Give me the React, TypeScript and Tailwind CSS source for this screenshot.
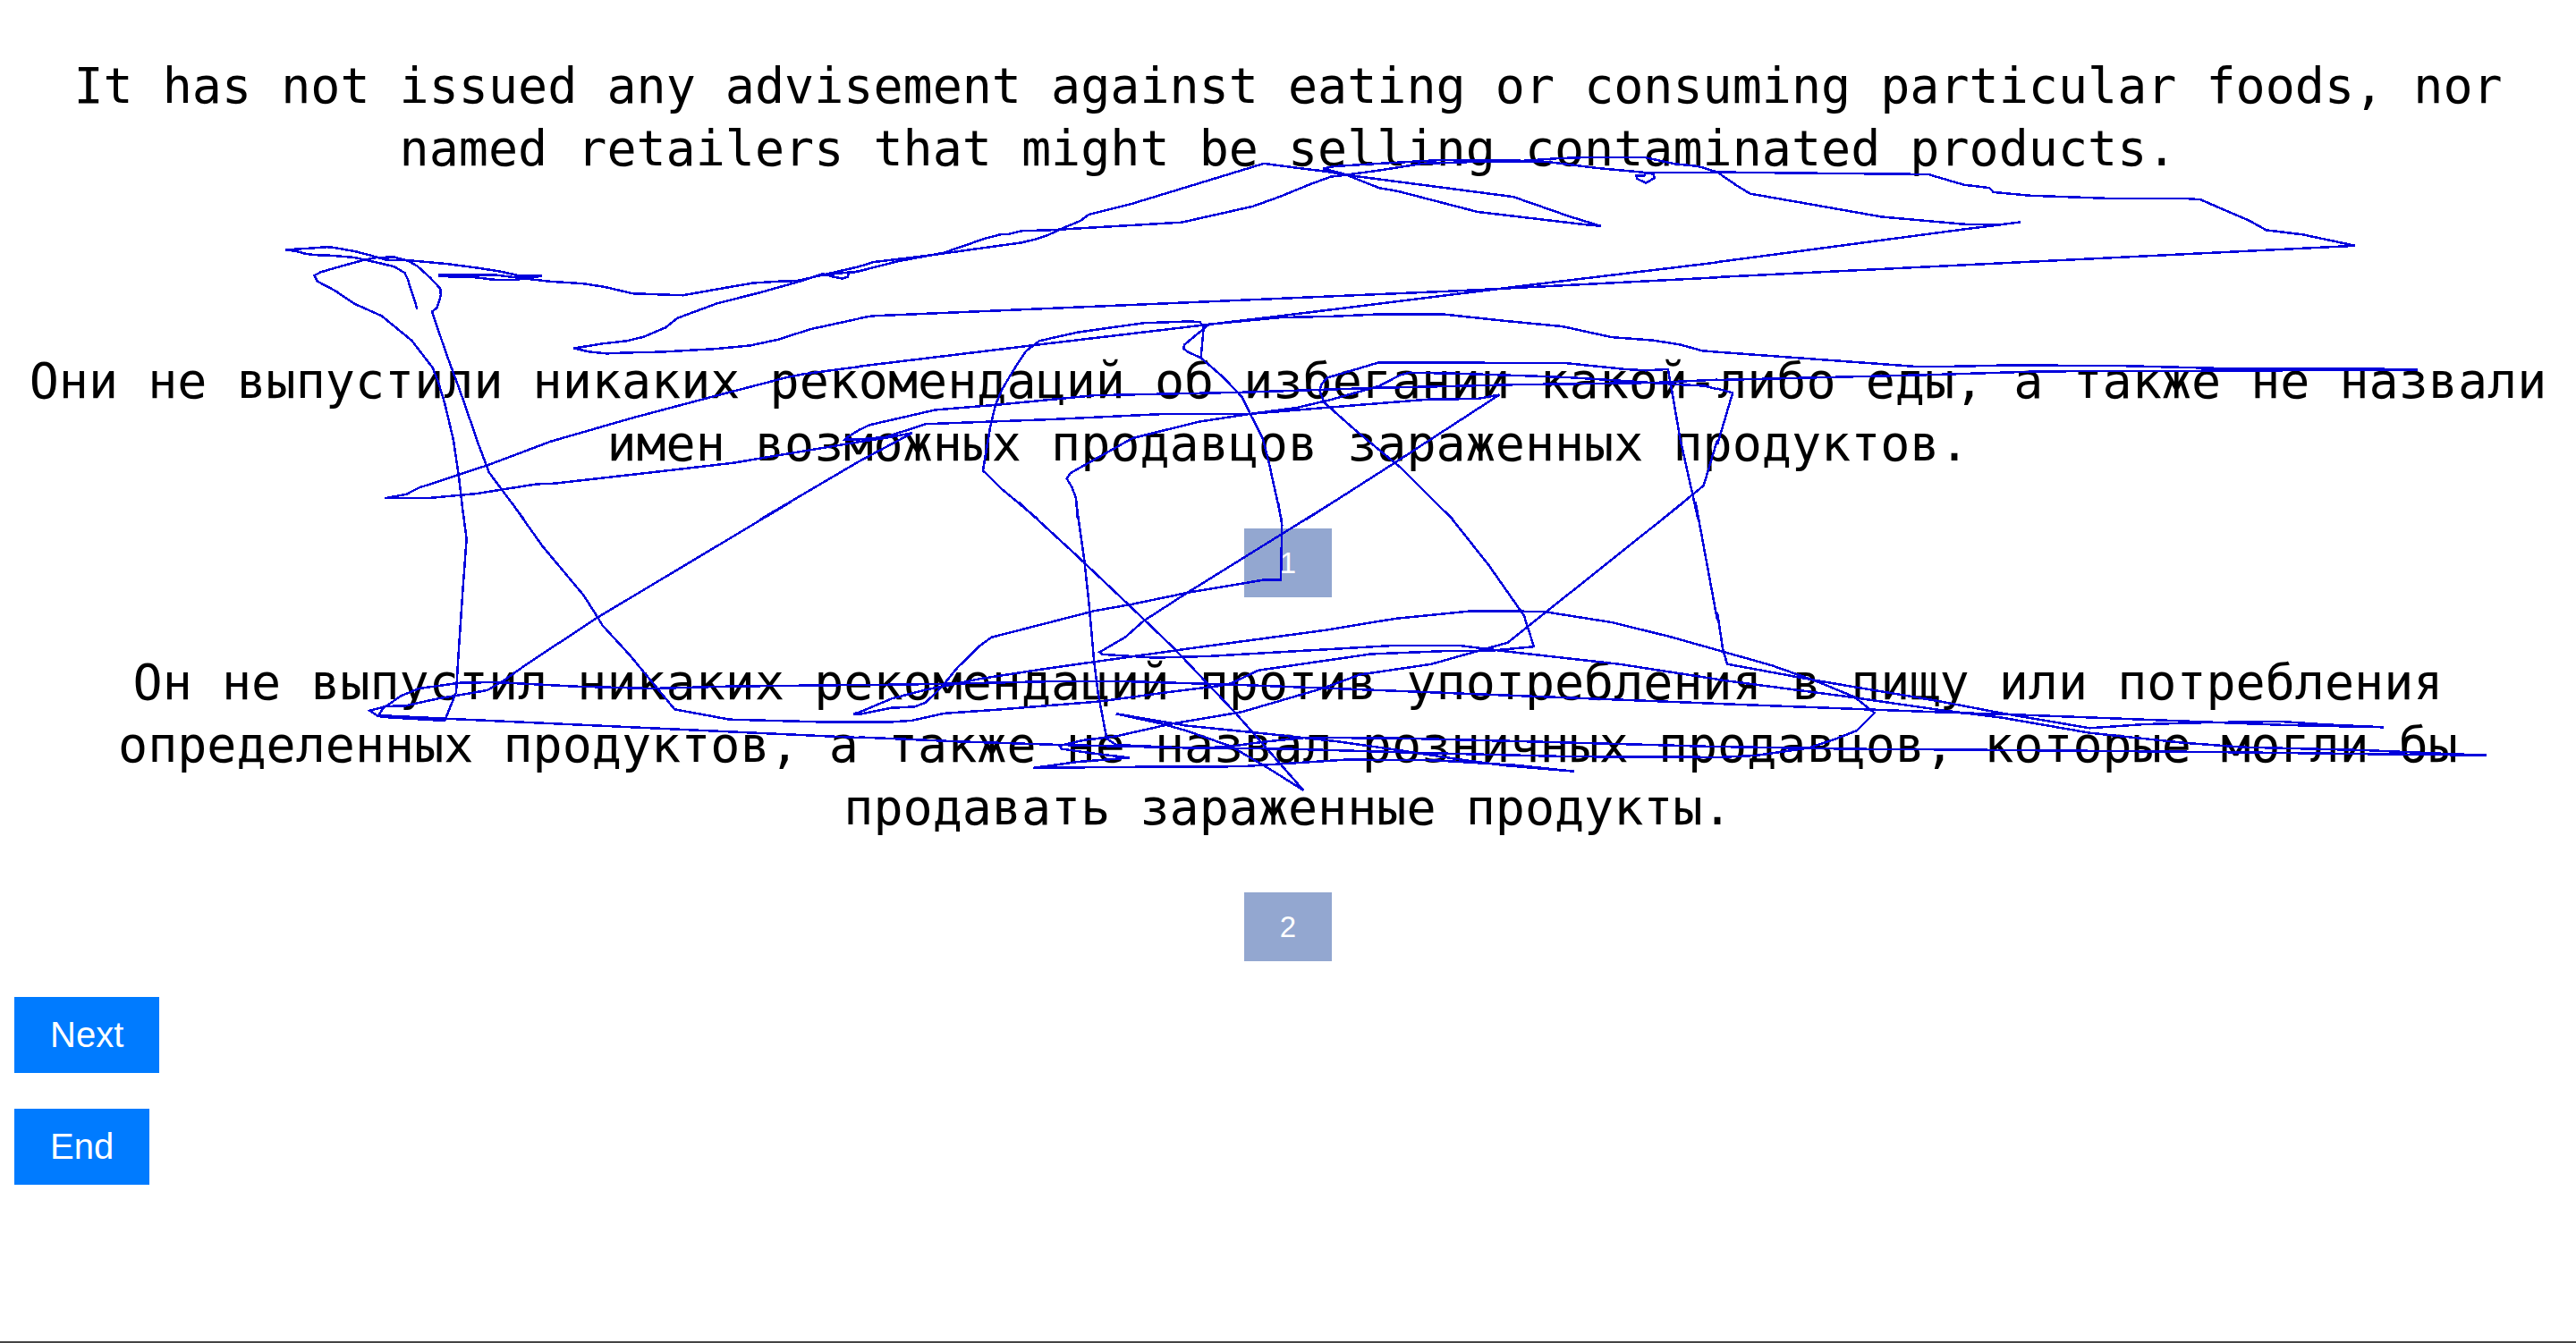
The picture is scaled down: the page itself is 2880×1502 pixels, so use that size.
type Tile = { transform: string; strokes: string[] };

// The scribble is stored as six drawing tiles, each in its own units.
const tiles: Tile[] = [
  {
    transform: "translate(0 41) scale(.612245 .344388)",
    strokes: [
      "762,885 744,785 739,767 720,747 690,734 647,717 607,711 575,709 555,704 542,697 521,692 560,688 597,683 610,685 650,698 680,712 705,725 750,727 817,738 868,750 912,762 950,777 990,777 940,790 900,789 870,782 803,778 803,774 905,774 960,786 1005,795 1065,802 1105,813 1155,834 1247,840 1310,820 1375,800 1420,795 1455,793 1500,775 1568,747",
      "688,717 720,716 745,728 762,745 785,782 804,818 805,840 798,880 789,893 815,1030 840,1150 875,1330 890,1400 893,1415 920,1480 957,1568",
      "688,717 665,725 630,742 585,765 574,776 580,795 612,825 648,868 697,907 752,987 790,1075 800,1120 812,1190 828,1310 838,1430 847,1568",
      "1568,762 1550,768 1548,780 1538,786 1520,779 1503,770 1460,795 1390,830 1310,866 1237,914 1215,945 1175,975 1145,988 1100,997 1048,1012 1075,1023 1107,1029 1150,1026 1205,1024 1305,1014 1370,1003 1420,984 1480,950 1568,916",
      "1500,775 1535,768 1568,762",
      "1568,1072 1470,1095 1440,1105 1310,1165 1155,1238 1005,1315 890,1392 765,1465 742,1486 703,1499 785,1498 870,1484 980,1453 1012,1451 1200,1413 1340,1384 1430,1357 1568,1316",
      "1568,1278 1548,1300 1543,1308 1568,1308",
      "1568,1380 1388,1568",
    ],
  },
  {
    transform: "translate(960 41) scale(.612245 .344388)",
    strokes: [
      "0,747 27,732 130,710 297,669 325,657 345,645 370,624 405,598 420,578 500,542 740,412 800,426 850,437 890,449 1195,520 1300,585 1355,615 1330,611 1230,590 1130,569 985,502 950,491 885,445 848,428 870,421 960,411 1060,401 1215,403 1280,395 1330,392 1435,392 1490,413 1533,421 1568,440",
      "0,762 70,730 155,702 230,656 260,642 275,641 297,631 350,628 590,603 720,551 770,519 825,479 862,455 890,449 955,433 1030,412 1150,405 1260,407 1350,427 1435,441 1568,441",
      "1437,441 1452,447 1453,459 1438,475 1422,462 1420,452 1435,451 1437,441",
      "0,915 25,907 500,871 1100,825 1568,782",
      "0,1071 320,1002 770,907 1200,812 1568,733",
      "1568,1024 1540,1020 1500,1000 1450,986 1375,976 1285,941 1180,923 1065,901 955,901 870,908 770,912 640,934 595,1000 593,1012 600,1023 625,1043 665,1105 700,1170 715,1225 738,1305 750,1390 772,1568",
      "625,1043 630,945 623,926 598,925 520,930 400,960 330,988 305,1022 282,1085 262,1145 250,1195 240,1270 227,1409 262,1470 328,1568",
      "0,1278 20,1261 140,1212 250,1196 430,1165 700,1155 940,1141 1200,1130 1450,1124 1568,1114",
      "0,1308 50,1300 122,1258 350,1243 550,1226 715,1225 800,1205 860,1180 950,1135 990,1098 1007,1091 1090,1094 1230,1102 1300,1107 1390,1117 1500,1130 1545,1134 1568,1145",
      "0,1380 98,1287 50,1303 0,1316",
      "400,1568 397,1500 390,1465 380,1435 387,1417 500,1304 620,1251 715,1225 900,1198 1040,1178 1130,1176 1170,1163 1060,1290 978,1385 817,1568",
      "1085,1568 990,1400 905,1275 850,1188 842,1150 845,1130 855,1108 880,1095 950,1058 1290,1060 1400,1080 1437,1084 1478,1080 1485,1150 1500,1305 1522,1480 1533,1568",
      "1568,1310 1543,1458 1467,1568",
    ],
  },
  {
    transform: "translate(1920 41) scale(.612245 .344388)",
    strokes: [
      "0,440 150,443 385,447 450,481 497,491 504,505 570,516 710,525 850,525 882,529 972,598 1002,628 1070,643 1165,679 0,781",
      "0,440 35,483 60,510 150,538 300,585 450,609 515,611 554,602 440,628 0,732",
      "0,1024 360,1071 400,1072 533,1067 740,1069 960,1079 1200,1079 1279,1081 930,1085 590,1087 390,1098 0,1115",
      "0,1143 28,1157 0,1325",
    ],
  },
  {
    transform: "translate(0 561) scale(.612245 .333333)",
    strokes: [
      "843,0 852,125 845,300 838,490 833,640 812,735 710,724 690,720 675,701 705,687 740,685 800,661 890,633 920,600 960,548 1090,390 1445,0",
      "933,0 990,148 1066,315 1092,390 1100,415 1150,515 1232,697 1332,731 1495,739 1568,740",
      "690,720 700,693 732,652 765,627 840,608 905,606 1050,620 1190,627 1330,620 1568,615",
      "690,717 812,728 1568,792",
      "1568,708 1558,712 1568,714",
    ],
  },
  {
    transform: "translate(960 561) scale(.612245 .344388)",
    strokes: [
      "0,716 55,716 97,711 155,688 250,676 440,649 560,620 660,598 680,590 730,548 935,495 1075,485 1150,485 1233,471 1215,370 1150,205 1082,53 1052,0",
      "0,685 60,640 120,612 220,576 340,543 480,508 600,478 850,418 980,380 1120,355 1250,357 1375,392 1480,438 1568,482",
      "0,691 60,670 102,666 122,653 150,605 180,540 220,470 242,441 430,355 500,333 600,296 740,254 771,254 773,75 766,0",
      "0,596 150,592 350,584 490,584 680,594 870,607 1240,633 1568,656",
      "0,765 180,779 370,790 560,798 780,803 1050,817 1300,828 1568,830",
      "291,0 395,170 490,330 575,475 690,690 812,937 750,868 680,795 600,745 555,722 470,689 600,728 740,753 870,778 970,803 1100,838 1180,857 1306,876 1200,856 1050,840 890,838 700,860 470,862 319,865 400,845 495,832 430,818 370,803 367,793 410,775 470,762 570,722 700,683 850,605 915,562 1045,528 1185,458 1508,0",
      "397,0 412,190 420,320 430,520 437,620 453,770 470,790 600,800 670,797 740,780 820,766 1000,769 1200,778 1450,790 1568,796",
      "868,0 600,296 520,388 487,440 440,489 445,496 540,507 640,502 980,467 1095,467 1200,490 1390,528 1568,577",
      "1528,0 1568,385",
    ],
  },
  {
    transform: "translate(1920 561) scale(.612245 .333333)",
    strokes: [
      "0,372 10,495 18,545 180,600 400,668 520,710 680,760 780,747 900,741 1030,738 1110,748 1217,757 1040,750 720,727 560,716 400,706 0,678",
      "0,498 100,550 180,602 250,655 287,709 255,768 215,797 165,827 70,852 0,858",
      "0,597 240,655 410,700 520,725 680,776 850,809 960,824 1180,834 1330,846 1405,851 1240,848 900,840 600,835 415,832 250,830 0,822",
    ],
  },
];

function Scribble() {
  return (
    <svg
      viewBox="0 0 2880 1500"
      aria-hidden="true"
      className="pointer-events-none absolute left-0 top-0 w-full"
      fill="none"
      stroke="#0000dc"
      strokeWidth="2.5"
      shapeRendering="crispEdges"
    >
      {tiles.map((tile) => (
        <g key={tile.transform} transform={tile.transform}>
          {tile.strokes.map((points) => (
            <polyline key={points} points={points} vectorEffect="non-scaling-stroke" />
          ))}
        </g>
      ))}
    </svg>
  );
}

function Sentence({ children }: { children: string }) {
  return (
    <p className="text-center font-['DejaVu_Sans_Mono',monospace] text-[55px] leading-[70px] text-black">
      {children}
    </p>
  );
}

function ChoiceButton({ children }: { children: string }) {
  return (
    <button type="button" className="bg-[#93a7d0] px-10 py-5 text-[33px] leading-[37px] text-white">
      {children}
    </button>
  );
}

function ActionButton({ children }: { children: string }) {
  return (
    <button type="button" className="bg-[#007bff] px-10 py-5 text-[40px] leading-[45px] text-white">
      {children}
    </button>
  );
}

export default function App() {
  return (
    <main className="relative min-h-screen border-b-2 border-[#444444] bg-white px-4 pt-[61px] font-['Liberation_Sans',Arial,sans-serif]">
      <Sentence>
        It has not issued any advisement against eating or consuming particular foods, nor named retailers that might
        be selling contaminated products.
      </Sentence>
      <div className="mt-[190px] flex flex-col items-center gap-[60px]">
        <Sentence>
          Они не выпустили никаких рекомендаций об избегании какой-либо еды, а также не назвали имен возможных
          продавцов зараженных продуктов.
        </Sentence>
        <ChoiceButton>1</ChoiceButton>
        <Sentence>
          Он не выпустил никаких рекомендаций против употребления в пищу или потребления определенных продуктов, а
          также не назвал розничных продавцов, которые могли бы продавать зараженные продукты.
        </Sentence>
        <ChoiceButton>2</ChoiceButton>
      </div>
      <div className="mt-10 flex flex-col items-start gap-10">
        <ActionButton>Next</ActionButton>
        <ActionButton>End</ActionButton>
      </div>
      <Scribble />
    </main>
  );
}
